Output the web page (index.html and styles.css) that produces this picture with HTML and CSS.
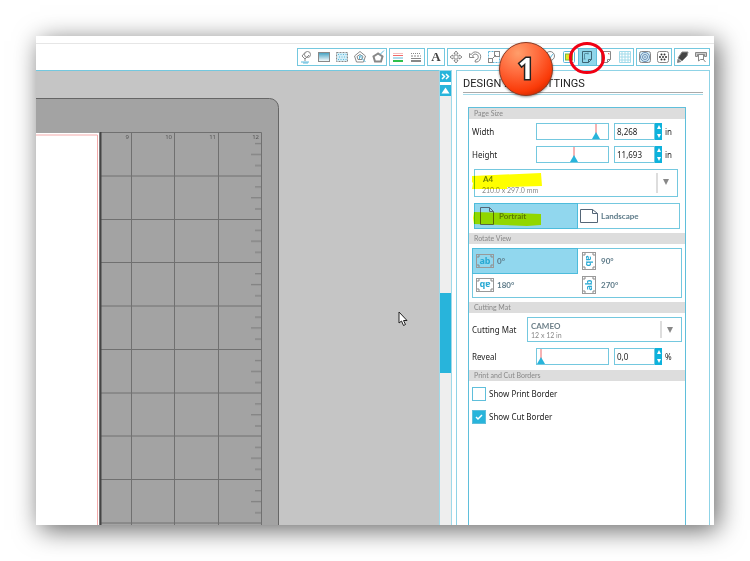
FILE: index.html
```html
<!DOCTYPE html>
<html lang="en">
<head>
    <meta charset="utf-8">
    <title>Design Page Settings</title>
    <link rel="stylesheet" href="styles.css">
</head>
<body>
    <div class="window">
        <div class="titlebar"></div>

        <div class="toolbar">
            <div class="group">
                <button type="button" aria-label="Fill color"><svg viewBox="0 0 14 14"><circle cx="8.500" cy="4.500" r="3"/><path d="M6 2.500L3 6l3 3 4-4M6 9v2"/><path class="blue" d="M2 12h8M4 13h5"/></svg></button>
                <button type="button" aria-label="Fill gradient"><svg viewBox="0 0 14 14"><defs><linearGradient id="fade" x2="0" y2="1"><stop offset="0" stop-color="#3f9fc0"/><stop offset="1" stop-color="#fff"/></linearGradient></defs><rect x="1.500" y="2.500" width="11" height="9" fill="url(#fade)"/></svg></button>
                <button type="button" aria-label="Fill pattern"><svg viewBox="0 0 14 14"><rect x="1.500" y="2.500" width="11" height="9" fill="#d4eef7" stroke-dasharray="2 1"/><path class="blue" d="M3 4.500h9M4 7h8M3 9.500h9" stroke-dasharray="1 1.500"/></svg></button>
                <button type="button" aria-label="Line style"><svg viewBox="0 0 14 14"><path d="M7 1.500l5.500 4.500-2 6h-7l-2-6z"/><path d="M7 4.500l3 2-1 3H5l-1-3z"/><path class="blue" d="M6.500 6l6 6M6.500 6h3M6.500 6v3"/></svg></button>
                <button type="button" aria-label="Line color"><svg viewBox="0 0 14 14"><path class="thick" d="M7 3.500L2.500 6.500l1.500 5h6l1.500-5z"/><path class="blue" d="M9 4.500l4-4"/></svg></button>
            </div>
            <div class="group">
                <button type="button" aria-label="Line colors"><svg viewBox="0 0 14 14"><path class="pink" d="M2 3.500h10"/><path class="red" d="M2 5.500h10"/><path class="blue" d="M2 8h10"/><path class="green" d="M2 11h10"/></svg></button>
                <button type="button" aria-label="Line types"><svg viewBox="0 0 14 14"><path d="M2 3.500h10" stroke-dasharray="1 1"/><path d="M2 6h10" stroke-dasharray="2 1"/><path d="M2 8.500h10"/><path class="thick" d="M2 11h10"/></svg></button>
            </div>
            <div class="group">
                <button type="button" class="letter" aria-label="Text style">A</button>
            </div>
            <div class="group group-wide">
                <button type="button" aria-label="Move"><svg viewBox="0 0 14 14"><path d="M7 1l2 2.500H8V6h2.500V5L13 7l-2.500 2V8H8v2.500h1L7 13l-2-2.500h1V8H3.500v1L1 7l2.500-2v1H6V3.500H5z"/></svg></button>
                <button type="button" aria-label="Rotate"><svg viewBox="0 0 14 14"><path d="M1.500 3.500v4h4.500L4.500 6a3 3 0 1 1 3 4l-.5 2A5 5 0 1 0 3.200 4.700z"/></svg></button>
                <button type="button" aria-label="Scale"><svg viewBox="0 0 14 14"><rect class="blue" x="1.500" y="1.500" width="11" height="11" stroke-dasharray="2 1"/><rect x="1.500" y="8.500" width="4" height="4"/><rect x="7.500" y="1.500" width="5" height="5"/><path d="M5 9l4-4"/></svg></button>
                <button type="button" aria-label="Align"></button>
                <button type="button" aria-label="Replicate"></button>
                <button type="button" aria-label="Offset"><svg viewBox="0 0 14 14"><circle cx="7" cy="6" r="4.500"/><path class="blue" d="M5 4l2 4 3-4"/></svg></button>
                <button type="button" aria-label="Trace"><svg viewBox="0 0 14 14"><rect class="blue" x="1.500" y="1.500" width="11" height="11" rx="1"/><rect x="3.500" y="4" width="7" height="6" fill="#e7e425" stroke="#73b843"/></svg></button>
                <button type="button" class="selected" aria-label="Page settings"><svg viewBox="0 0 14 14"><path d="M2.500 1.500h9v8l-3 3h-6z"/><path d="M8.500 12.500v-3h3"/><path class="faint" d="M4.500 4v5M4.500 3.500h4M8 2.500v2M3.500 9h2"/></svg></button>
                <button type="button" aria-label="Registration marks"><svg viewBox="0 0 14 14"><path d="M2.500 1.500h9v8l-3 3h-6z"/><path d="M8.500 12.500v-3h3"/><path class="red" d="M4 4.500v-1h1M9 3.500h1v1M4 9v1h1"/></svg></button>
                <button type="button" aria-label="Grid"><svg viewBox="0 0 14 14"><path class="pale" d="M1.500 1.500h11v11h-11zM4 1.500v11M7 1.500v11M10 1.500v11M1.500 4h11M1.500 7h11M1.500 10h11"/></svg></button>
            </div>
            <div class="group">
                <button type="button" aria-label="Trace area"><svg viewBox="0 0 14 14"><rect x="1.500" y="1.500" width="11" height="11" rx="2" fill="#d5ecf6"/><circle class="navy" cx="7" cy="7" r="4.500"/><circle class="navy" cx="7" cy="7" r="2.500"/><circle class="navy" cx="7" cy="7" r=".5"/></svg></button>
                <button type="button" aria-label="Rhinestones"><svg viewBox="0 0 14 14"><rect x="1.500" y="1.500" width="11" height="11" rx="2"/><g fill="#333" stroke="none"><circle cx="7" cy="7" r="1"/><circle cx="4" cy="7" r="1"/><circle cx="10" cy="7" r="1"/><circle cx="5.500" cy="4.500" r="1"/><circle cx="8.500" cy="4.500" r="1"/><circle cx="5.500" cy="9.500" r="1"/><circle cx="8.500" cy="9.500" r="1"/></g></svg></button>
            </div>
            <div class="group">
                <button type="button" aria-label="Cut settings"><svg viewBox="0 0 14 14"><path d="M6 2h6l-1 4-5 5-4-3z" fill="#444"/><path d="M2 9l-.5 3.500L5 11.500" fill="#777"/></svg></button>
                <button type="button" aria-label="Send to machine"><svg viewBox="0 0 14 14"><path d="M1.500 2.500h11v4h-2v-2h-7v2h-2z" fill="#ccc"/><path d="M4.500 5v6l2-1.500h3V5M9 9l2.500 3"/></svg></button>
            </div>
        </div>

        <div class="main">
            <div class="workspace">
                <svg class="mat" width="100%" height="100%">
                    <defs>
                        <pattern id="ticks" x="215" y="62" width="10" height="43.400" patternUnits="userSpaceOnUse">
                            <path d="M4 10.500h6M0 21.500h10M4 32.500h6" stroke="#777"/>
                        </pattern>
                    </defs>
                    <path d="M-1 27.500H233.500a9 9 0 0 1 9 9V2000H-1z" fill="#a3a3a3" stroke="#666"/>
                    <path d="M64 61.500H225.500V2000M95.500 61.500V2000M138.500 61.500V2000M182.500 61.500V2000" fill="none" stroke="#707070"/>
                    <path d="M64 105h161M64 148.500h161M64 191.500h161M64 235h161M64 278.500h161M64 322h161M64 365h161M64 408.500h161M64 452h161" stroke="#707070"/>
                    <rect x="215" y="62" width="10" height="390" fill="url(#ticks)"/>
                    <rect x="0" y="62" width="63" height="2000" fill="#fff"/>
                    <path d="M0 64H61.500V2000" fill="none" stroke="#f3aaaa"/>
                    <path d="M64.500 61V2000" stroke="#444" stroke-width="2"/>
                    <g class="ruler" text-anchor="end">
                        <text x="93" y="68">9</text>
                        <text x="136" y="68">10</text>
                        <text x="180" y="68">11</text>
                        <text x="223" y="68">12</text>
                    </g>
                </svg>
            </div>

            <div class="scroller">
                <button type="button" aria-label="Collapse panel"><svg viewBox="0 0 11 11"><path d="M2 3l2.500 2.500L2 8M6 3l2.500 2.500L6 8" fill="none" stroke="#fff" stroke-width="1.500"/></svg></button>
                <button type="button" aria-label="Scroll up"><svg viewBox="0 0 11 11"><path d="M1.500 8.500L5.500 2.500 9.500 8.500z" fill="#fff"/></svg></button>
                <div class="track"><div class="thumb"></div></div>
            </div>

            <div class="panel">
                <h1>DESIGN PAGE SETTINGS</h1>
                <form class="settings">
                    <h2>Page Size</h2>
                    <div class="section page-size">
                        <div class="row">
                            <label for="width">Width</label>
                            <input type="range" class="slider" aria-label="Width slider" value="88">
                            <input type="text" id="width" class="number" value="8,268">
                            <span class="spin">
                                <button type="button" aria-label="Increase width"></button>
                                <button type="button" class="down" aria-label="Decrease width"></button>
                            </span>
                            <span class="unit">in</span>
                        </div>
                        <div class="row">
                            <label for="height">Height</label>
                            <input type="range" class="slider" aria-label="Height slider" value="52">
                            <input type="text" id="height" class="number" value="11,693">
                            <span class="spin">
                                <button type="button" aria-label="Increase height"></button>
                                <button type="button" class="down" aria-label="Decrease height"></button>
                            </span>
                            <span class="unit">in</span>
                        </div>
                        <div class="dropdown paper">
                            <select aria-label="Paper size">
                                <option>A4</option>
                            </select>
                            <small>210.0 x 297.0 mm</small>
                            <svg class="marker" viewBox="0 0 71 16" preserveAspectRatio="none"><path d="M1 3L70 0l1 13-35 1v2H1l1-6-1-1z"/></svg>
                        </div>
                        <div class="choices orientation">
                            <label>
                                <input type="radio" name="orientation" checked>
                                <svg class="sheet" viewBox="0 0 18 20"><path d="M2.500 1.500h9l4 4v13h-13zM11.500 1.500v4h4"/></svg>
                                <span>Portrait</span>
                                <svg class="marker" viewBox="0 0 68 16" preserveAspectRatio="none"><path d="M1 1l38 1 29 1v11l-14 1-53-2-1-6z"/></svg>
                            </label>
                            <label>
                                <input type="radio" name="orientation">
                                <svg class="sheet" viewBox="0 0 18 20"><path d="M.5 3.500h12l5 4v9H.5zM12.500 3.500v4h5"/></svg>
                                <span>Landscape</span>
                            </label>
                        </div>
                    </div>

                    <h2>Rotate View</h2>
                    <div class="section">
                        <div class="choices rotate">
                            <label>
                                <input type="radio" name="rotate" checked>
                                <svg class="view" viewBox="0 0 18 18">
                                    <rect x=".5" y="2.500" width="17" height="13"/>
                                    <path d="M2 6V4h2M14 4h2v2M16 12v2h-2M4 14H2v-2"/>
                                    <text x="9" y="12" text-anchor="middle">ab</text>
                                </svg>
                                <span>0°</span>
                            </label>
                            <label>
                                <input type="radio" name="rotate">
                                <svg class="view turn-90" viewBox="0 0 18 18">
                                    <rect x=".5" y="2.500" width="17" height="13"/>
                                    <path d="M2 6V4h2M14 4h2v2M16 12v2h-2M4 14H2v-2"/>
                                    <text x="9" y="12" text-anchor="middle">ab</text>
                                </svg>
                                <span>90°</span>
                            </label>
                            <label>
                                <input type="radio" name="rotate">
                                <svg class="view turn-180" viewBox="0 0 18 18">
                                    <rect x=".5" y="2.500" width="17" height="13"/>
                                    <path d="M2 6V4h2M14 4h2v2M16 12v2h-2M4 14H2v-2"/>
                                    <text x="9" y="12" text-anchor="middle">ab</text>
                                </svg>
                                <span>180°</span>
                            </label>
                            <label>
                                <input type="radio" name="rotate">
                                <svg class="view turn-270" viewBox="0 0 18 18">
                                    <rect x=".5" y="2.500" width="17" height="13"/>
                                    <path d="M2 6V4h2M14 4h2v2M16 12v2h-2M4 14H2v-2"/>
                                    <text x="9" y="12" text-anchor="middle">ab</text>
                                </svg>
                                <span>270°</span>
                            </label>
                        </div>
                    </div>

                    <h2>Cutting Mat</h2>
                    <div class="section cutting">
                        <div class="row">
                            <label for="cutting-mat">Cutting Mat</label>
                            <div class="dropdown">
                                <select id="cutting-mat">
                                    <option>CAMEO</option>
                                </select>
                                <small>12 x 12 in</small>
                            </div>
                        </div>
                        <div class="row">
                            <label for="reveal">Reveal</label>
                            <input type="range" class="slider" aria-label="Reveal slider" value="0">
                            <input type="text" id="reveal" class="number" value="0,0">
                            <span class="spin">
                                <button type="button" aria-label="Increase reveal"></button>
                                <button type="button" class="down" aria-label="Decrease reveal"></button>
                            </span>
                            <span class="unit">%</span>
                        </div>
                    </div>

                    <h2>Print and Cut Borders</h2>
                    <div class="section borders">
                        <label><input type="checkbox"> Show Print Border</label>
                        <label><input type="checkbox" checked> Show Cut Border</label>
                    </div>
                </form>
            </div>
        </div>

        <svg class="cursor" viewBox="0 0 10 16"><path d="M1 1v11l2.500-2 2 4.500 2-1-2-4H9z"/></svg>
        <svg class="ring" viewBox="0 0 38 34"><ellipse cx="19" cy="17" rx="16.500" ry="14.500"/></svg>
        <svg class="ball" viewBox="0 0 60 60">
            <defs>
                <radialGradient id="shine" cx=".35" cy=".2" r=".85">
                    <stop offset="0" stop-color="#ff9e6b"/>
                    <stop offset=".45" stop-color="#ff6a3c"/>
                    <stop offset=".85" stop-color="#fa3a08"/>
                    <stop offset="1" stop-color="#d42a00"/>
                </radialGradient>
            </defs>
            <circle cx="30" cy="30" r="26.500" fill="url(#shine)" stroke="#8c3a22"/>
            <text x="30" y="40" text-anchor="middle">1</text>
        </svg>
    </div>
</body>
</html>
```
FILE: styles.css
```css
* {
    box-sizing: border-box;
}

body {
    margin: 0;
    padding: 36px;
    background-color: #fff;
    color: #222;
    font-family: "Noto Sans", sans-serif;
    font-size: 8px;
    line-height: 12px;
}

button,
input,
select {
    margin: 0;
    padding: 0;
    border: none;
    background: none;
    color: inherit;
    font: inherit;
}

.window {
    position: relative;
    display: flex;
    flex-direction: column;
    min-height: calc(100vh - 72px);
    background-color: #fff;
    box-shadow: 4px 5px 24px rgba(0, 0, 0, 0.6);
}

.titlebar {
    height: 8px;
    border-bottom: 1px solid #e6e6e6;
}

/* Toolbar */
.toolbar {
    display: flex;
    justify-content: flex-end;
    gap: 2px;
    padding: 4px;
}

.group {
    display: flex;
    box-shadow: inset 0 0 0 1px #74c8df;
}

.group-wide {
    width: 187px;
}

.group button {
    flex: 1;
    display: flex;
    align-items: center;
    justify-content: center;
    min-width: 18px;
    height: 18px;
}

.group svg {
    width: 14px;
    height: 14px;
    fill: none;
    stroke: #888;
}

.group .letter {
    color: #444;
    font-family: "Liberation Serif", serif;
    font-size: 13px;
    font-weight: bold;
}

.group .selected {
    background-color: #8fd6ea;
    box-shadow: inset 0 0 0 1px #5fbfdb;
}

.group .selected svg {
    stroke: #3c6675;
}

.group .faint {
    stroke: #5690a3;
}

.group .blue {
    stroke: #5db9dc;
}

.group .pale {
    stroke: #a3dbea;
}

.group .thick {
    stroke-width: 2;
}

.group .pink {
    stroke: #f5bcbc;
}

.group .red {
    stroke: #f06a6a;
}

.group .green {
    stroke: #2fc04c;
    stroke-width: 2;
}

.group .navy {
    stroke: #6a8fb5;
}

/* Workspace */
.main {
    flex: 1;
    display: flex;
    padding-right: 4px;
}

.workspace {
    position: relative;
    flex: 1;
    border-top: 1px solid #74c8df;
    background-color: #c5c5c5;
}

.mat {
    position: absolute;
    inset: 0;
}

.ruler {
    fill: #555;
    font-size: 6px;
}

.scroller {
    display: flex;
    flex-direction: column;
    gap: 3px;
    width: 13px;
    margin-right: 4px;
    border: solid #9fd9e9;
    border-width: 1px 1px 0;
}

.scroller button {
    height: 11px;
    background-color: #28b4db;
}

.scroller svg {
    display: block;
    width: 11px;
    height: 11px;
}

.track {
    flex: 1;
    margin-top: -3px;
    padding-top: 197px;
    background-color: #eee;
}

.thumb {
    height: 80px;
    background-color: #28b4db;
}

/* Settings panel */
.panel {
    display: flex;
    flex-direction: column;
    width: 254px;
    padding: 0 6px;
    border: 1px solid #8fd3e6;
    border-bottom: none;
}

h1 {
    margin: 6px 0 13px;
    padding-bottom: 1px;
    border-bottom: 1px solid #aaa;
    box-shadow: 0 1px #fff, 0 2px #a5dbea;
    font-family: Roboto, sans-serif;
    font-size: 11px;
    font-weight: normal;
    line-height: 14px;
}

.settings {
    flex: 1;
    display: flex;
    flex-direction: column;
    width: 218px;
    margin: 1px 0 0 5px;
    border: 1px solid #5fbfdb;
    border-bottom: none;
}

h2 {
    margin: 0;
    padding-left: 5px;
    background-color: #ddd;
    color: #888;
    font-family: Lato, sans-serif;
    font-size: 7px;
    font-weight: normal;
    line-height: 11px;
}

.section {
    display: flex;
    flex-direction: column;
    padding: 4px 3px;
}

.page-size,
.cutting {
    gap: 6px;
}

.cutting {
    padding-bottom: 5px;
}

.row {
    display: flex;
    align-items: center;
}

.row > label {
    flex: 1;
}

.slider {
    appearance: none;
    width: 73px;
    height: 17px;
    margin-right: 5px;
    border: 1px solid #74c8df;
}

.slider::-webkit-slider-thumb {
    appearance: none;
    width: 8px;
    height: 15px;
    background-image: url("data:image/svg+xml,%3Csvg xmlns='http://www.w3.org/2000/svg' viewBox='0 0 8 15'%3E%3Cpath d='M4 0v10' stroke='%23e66'/%3E%3Cpath d='M0 15l4-7 4 7z' fill='%2328b4db'/%3E%3C/svg%3E");
}

.number {
    width: 41px;
    height: 17px;
    padding-left: 2px;
    border: 1px solid #74c8df;
}

.spin {
    display: flex;
    flex-direction: column;
    width: 7px;
    height: 17px;
    background-color: #0db2dc;
}

.spin button {
    flex: 1;
    display: flex;
    align-items: center;
    justify-content: center;
}

.spin button::before {
    content: "";
    border: 2px solid transparent;
    border-top: none;
    border-bottom: 4px solid #fff;
}

.spin .down::before {
    border-top: 4px solid #fff;
    border-bottom: none;
}

.unit {
    width: 20px;
    padding-left: 3px;
}

.dropdown {
    position: relative;
    width: 155px;
    height: 25px;
    font-family: Lato, sans-serif;
}

.dropdown select {
    appearance: none;
    width: 100%;
    height: 100%;
    padding: 0 24px 8px 3px;
    border: 1px solid #74c8df;
    color: #6c7f88;
    font-size: 8px;
    font-weight: bold;
}

.dropdown small {
    position: absolute;
    left: 4px;
    bottom: 2px;
    color: #888;
    font-size: 7px;
    line-height: 10px;
    pointer-events: none;
}

.dropdown::before {
    content: "";
    position: absolute;
    top: 4px;
    bottom: 4px;
    right: 20px;
    border-left: 2px solid #ddd;
}

.dropdown::after {
    content: "";
    position: absolute;
    top: 10px;
    right: 9px;
    border: 3px solid transparent;
    border-top: 6px solid #888;
    border-bottom: none;
    pointer-events: none;
}

.paper {
    width: 204px;
    height: 28px;
    margin-left: 2px;
}

.paper select {
    padding: 0 24px 8px 8px;
}

.paper small {
    left: 8px;
}

/* Highlighter strokes */
.marker {
    position: absolute;
    top: 4px;
    left: -3px;
    width: 71px;
    height: 16px;
    fill: #ff0;
    mix-blend-mode: multiply;
    pointer-events: none;
}

.choices {
    display: grid;
    grid-template-columns: 1fr 1fr;
    border: 1px solid #74c8df;
    color: #5d7a88;
    font-family: Lato, sans-serif;
    font-size: 8px;
    font-weight: bold;
}

.choices label {
    position: relative;
    display: flex;
    align-items: center;
    gap: 3px;
    height: 24px;
    padding-left: 3px;
}

.choices label:has(:checked) {
    background-color: #91d7ee;
    box-shadow: 0 0 0 1px #4dbcdc;
}

.choices input {
    position: absolute;
    opacity: 0;
}

.orientation {
    width: 206px;
    margin-left: 2px;
}

.orientation .marker {
    top: 7px;
    left: -2px;
    width: 68px;
}

.sheet {
    width: 18px;
    height: 20px;
    fill: none;
    stroke: #567;
}

.view {
    width: 18px;
    height: 18px;
    fill: none;
    stroke: #999;
}

.view path {
    stroke: #888;
}

.view text {
    fill: #28a9d3;
    stroke: none;
    font-family: "Noto Sans", sans-serif;
    font-size: 9px;
    font-weight: bold;
}

.turn-90 {
    transform: rotate(90deg);
}

.turn-180 {
    transform: rotate(180deg);
}

.turn-270 {
    transform: rotate(270deg);
}

.borders {
    gap: 9px;
    padding-top: 6px;
}

.borders label {
    display: flex;
    align-items: center;
    gap: 3px;
}

.borders input {
    appearance: none;
    width: 14px;
    height: 14px;
    border: 1px solid #5fbfdb;
}

.borders input:checked {
    background: #28b4db url("data:image/svg+xml,%3Csvg xmlns='http://www.w3.org/2000/svg' viewBox='0 0 12 12'%3E%3Cpath d='M3 6l2 2 4-4' fill='none' stroke='%23fff' stroke-width='1.500'/%3E%3C/svg%3E");
}

/* Annotations over the window */
.cursor {
    position: absolute;
    top: 275px;
    left: 362px;
    width: 10px;
    height: 16px;
    fill: #fff;
    stroke: #222;
}

.ring {
    position: absolute;
    top: 5px;
    right: 108px;
    width: 38px;
    height: 34px;
    fill: none;
    stroke: #f00013;
    stroke-width: 3;
}

.ball {
    position: absolute;
    top: 3px;
    right: 158px;
    width: 60px;
    height: 60px;
    filter: drop-shadow(0 1px 1px rgba(0, 0, 0, 0.4));
}

.ball text {
    fill: #fff;
    stroke: #222;
    stroke-width: 3;
    paint-order: stroke;
    font-family: "Open Sans", sans-serif;
    font-size: 28px;
    font-weight: bold;
}
```
